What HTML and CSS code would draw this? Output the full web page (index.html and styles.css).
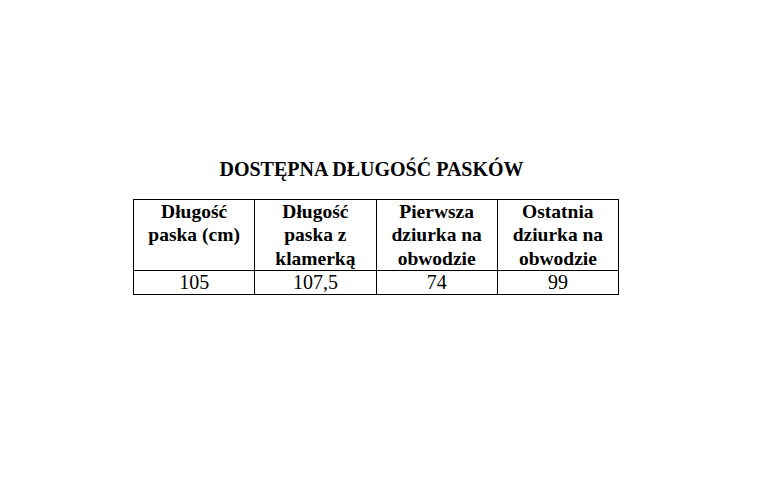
FILE: index.html
```html
<!DOCTYPE html>
<html lang="pl">
<head>
<meta charset="utf-8">
<link rel="stylesheet" href="styles.css">
</head>
<body>
<div class="page">
  <h1 class="title">DOSTĘPNA DŁUGOŚĆ PASKÓW</h1>
  <table class="sizes">
    <tr class="head">
      <th>Długość<br>paska (cm)</th>
      <th>Długość<br>paska z<br>klamerką</th>
      <th>Pierwsza<br>dziurka na<br>obwodzie</th>
      <th>Ostatnia<br>dziurka na<br>obwodzie</th>
    </tr>
    <tr class="row">
      <td>105</td>
      <td>107,5</td>
      <td>74</td>
      <td>99</td>
    </tr>
  </table>
</div>
</body>
</html>
```
FILE: styles.css
```css
html, body {
  margin: 0;
  padding: 0;
  background: #ffffff;
  color: #000000;
  font-family: "Liberation Serif", "Times New Roman", serif;
}
.page {
  width: 764px;
  height: 500px;
  padding-top: 158px;
  padding-left: 133px;
  box-sizing: border-box;
}
.title {
  width: 477px;
  margin: 0 0 18px 0;
  font-size: 20px;
  line-height: 23px;
  font-weight: bold;
  text-align: center;
}
.sizes {
  border-collapse: collapse;
  table-layout: fixed;
  width: 486px;
}
.sizes th,
.sizes td {
  border: 1px solid #000;
  width: 120px;
  padding: 0;
  text-align: center;
  font-size: 19.5px;
}
.sizes th {
  font-weight: bold;
  line-height: 23.3px;
  vertical-align: top;
  height: 69px;
}
.sizes td {
  font-weight: normal;
  line-height: 23px;
  font-size: 20px;
}
```
